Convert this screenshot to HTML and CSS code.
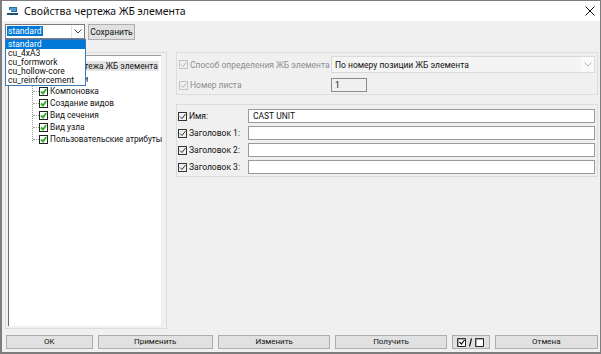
FILE: index.html
```html
<!DOCTYPE html>
<html lang="ru">
  <head>
    <meta charset="UTF-8" />
    <title>Свойства чертежа ЖБ элемента</title>
    <link rel="stylesheet" href="styles.css">
  </head>
  <body>
    <div class="window">
      <div class="titlebar">
        <svg class="app-icon" width="11" height="10" viewBox="0 0 11 10">
          <path d="M2 1h8v5H2z" fill="#2a6f9e" />
          <path d="M3 2h6v3H3z" fill="#4a9fd0" />
          <path d="M0 7h11v2H0z" fill="#1d4f73" />
          <path d="M1 4h3v3H1z" fill="#fff" />
        </svg>
        <span class="title">Свойства чертежа ЖБ элемента</span>
        <svg class="close" width="10" height="10" viewBox="0 0 10 10">
          <path d="M0.5 0.5l9 9M9.5 0.5l-9 9" stroke="#111" stroke-width="1" />
        </svg>
      </div>

      <div class="body">
        <div class="toolbar">
          <div class="combo">
            <span class="combo-value"><span class="selected-text">standard</span></span>
            <span class="combo-arrow">
              <svg width="8" height="5" viewBox="0 0 8 5"><path d="M0.5 0.5l3.5 3.5l3.5-3.5" fill="none" stroke="#444" /></svg>
            </span>
            <ul class="combo-list">
              <li class="active">standard</li>
              <li>cu_4xA3</li>
              <li>cu_formwork</li>
              <li>cu_hollow-core</li>
              <li>cu_reinforcement</li>
            </ul>
          </div>
          <button class="btn btn-save" type="button">Сохранить</button>
        </div>

        <div class="main">
          <div class="tree-frame">
            <div class="tree">
              <div class="node root"><span class="node-label current">Свойства чертежа ЖБ элемента</span></div>
              <div class="node level1"><span class="node-label">Настройки</span></div>
              <div class="children">
                <div class="node leaf"><span class="tick"></span><span class="node-label">Компоновка</span></div>
                <div class="node leaf"><span class="tick"></span><span class="node-label">Создание видов</span></div>
                <div class="node leaf"><span class="tick"></span><span class="node-label">Вид сечения</span></div>
                <div class="node leaf"><span class="tick"></span><span class="node-label">Вид узла</span></div>
                <div class="node leaf"><span class="tick"></span><span class="node-label">Пользовательские атрибуты</span></div>
              </div>
            </div>
          </div>

          <div class="props">
            <div class="group group-top">
              <div class="row">
                <label class="check-label disabled"><span class="cb"></span>Способ определения ЖБ элемента</label>
                <div class="select-disabled">
                  <span>По номеру позиции ЖБ элемента</span>
                  <span class="select-arrow">
                    <svg width="8" height="5" viewBox="0 0 8 5"><path d="M0.5 0.5l3.5 3.5l3.5-3.5" fill="none" stroke="#b5b5b5" /></svg>
                  </span>
                </div>
              </div>
              <div class="row">
                <label class="check-label disabled"><span class="cb"></span>Номер листа</label>
                <div class="sheet-no">1</div>
              </div>
            </div>

            <div class="group group-names">
              <div class="row">
                <label class="check-label short"><span class="cb"></span>Имя:</label>
                <input class="field" type="text" value="CAST UNIT" />
              </div>
              <div class="row">
                <label class="check-label short"><span class="cb"></span>Заголовок 1:</label>
                <input class="field" type="text" value="" />
              </div>
              <div class="row">
                <label class="check-label short"><span class="cb"></span>Заголовок 2:</label>
                <input class="field" type="text" value="" />
              </div>
              <div class="row">
                <label class="check-label short"><span class="cb"></span>Заголовок 3:</label>
                <input class="field" type="text" value="" />
              </div>
            </div>
          </div>
        </div>

        <div class="footer">
          <button class="btn btn-ok" type="button">OK</button>
          <button class="btn btn-apply" type="button">Применить</button>
          <button class="btn btn-modify" type="button">Изменить</button>
          <button class="btn btn-get" type="button">Получить</button>
          <button class="btn btn-toggle" type="button">
            <svg width="27" height="9" viewBox="0 0 27 9">
              <path d="M0.5 0.5h8v8h-8z" fill="#fff" stroke="#222" />
              <path d="M1 1h7M1 1v7" stroke="#555" />
              <path d="M2.5 4l2 2l3-4" fill="none" stroke="#111" stroke-width="1.2" />
              <path d="M14.5 0.5l-2 8" stroke="#111" stroke-width="1.2" />
              <path d="M18.5 0.5h8v8h-8z" fill="#fff" stroke="#222" />
              <path d="M19 1h7M19 1v7" stroke="#555" />
            </svg>
          </button>
          <button class="btn btn-cancel" type="button">Отмена</button>
        </div>
      </div>
    </div>
  </body>
</html>
```

FILE: styles.css
```css
* {
  padding: 0;
  margin: 0;
  box-sizing: border-box;
  font-family: Roboto, "Noto Sans", sans-serif;
}

body {
  width: 601px;
  height: 354px;
  overflow: hidden;
  background: #6f6f6f;
}

.window {
  width: 601px;
  height: 354px;
  display: flex;
  flex-direction: column;
  border: 1px solid #7d7d7d;
  border-left-width: 2px;
  border-bottom-width: 2px;
  background: #f0f0f0;
}

.titlebar {
  height: 21px;
  display: flex;
  align-items: center;
  background: #fff;
  padding-left: 5px;
  padding-right: 4px;
}

.app-icon {
  margin-right: 6px;
}

.title {
  font-family: "Noto Sans", sans-serif;
  font-size: 10.5px;
  color: #111;
  flex: 1;
}

.close {
  margin-right: 1px;
}

.body {
  flex: 1;
  display: flex;
  flex-direction: column;
  padding: 3px 2px 0 3px;
}

/* top toolbar */
.toolbar {
  display: flex;
  gap: 3px;
  height: 16px;
}

.combo {
  position: relative;
  width: 80px;
  height: 15px;
  display: flex;
  background: #fff;
  border: 1px solid #7a7a7a;
}

.combo-value {
  flex: 1;
  padding: 1px 0 0 1px;
  font-size: 8.5px;
  line-height: 11px;
}

.selected-text {
  background: #0078d7;
  color: #fff;
  padding: 0 1px;
}

.combo-arrow {
  width: 13px;
  display: flex;
  align-items: center;
  justify-content: center;
  border-left: 1px solid #e0e0e0;
}

.combo-list {
  position: absolute;
  left: -1px;
  top: 14px;
  width: 81px;
  list-style: none;
  background: #fff;
  border: 1px solid #3c78b4;
  z-index: 5;
}

.combo-list li {
  height: 9px;
  font-size: 8.5px;
  line-height: 9px;
  padding-left: 2px;
  color: #111;
}

.combo-list li.active {
  background: #0078d7;
  color: #fff;
}

.btn {
  background: #e1e1e1;
  border: 1px solid #adadad;
  font-size: 8px;
  color: #111;
  height: 14px;
  line-height: 12px;
}

.btn-save {
  width: 47px;
  height: 16px;
  font-size: 8.5px;
}

/* main area */
.main {
  flex: 1;
  display: flex;
  margin-top: 12px;
}

.tree-frame {
  width: 162px;
  height: 277px;
  padding: 2px 5px 2px 2px;
  border: 1px solid #dcdcdc;
}

.tree {
  height: 100%;
  background: #fff;
  border-left: 1px solid #6d6d6d;
  border-top: 1px solid #a0a0a0;
  padding-top: 4px;
}

.node {
  height: 12px;
  display: flex;
  align-items: center;
  font-size: 8.3px;
  color: #111;
  white-space: nowrap;
}

.root {
  padding-left: 22px;
}

.level1 {
  height: 13px;
  padding-left: 37px;
}

.current {
  background: #e5e5e5;
  padding: 0 1px;
}

.children {
  margin-left: 23px;
  border-left: 1px dotted #9a9a9a;
  height: 56px;
}

.leaf {
  padding-left: 6px;
  position: relative;
}

.leaf::before {
  content: "";
  position: absolute;
  left: 0;
  top: 6px;
  width: 6px;
  border-top: 1px dotted #9a9a9a;
}

.tick {
  width: 9px;
  height: 9px;
  border: 1px solid #222;
  background: #fff url("data:image/svg+xml;utf8,<svg xmlns='http://www.w3.org/2000/svg' width='7' height='7'><path d='M1 3.5l2 2l3.2-4.5' fill='none' stroke='%2322b022' stroke-width='1.8'/></svg>") center no-repeat;
  margin-right: 2px;
  flex: none;
}

/* property groups */
.props {
  flex: 1;
  margin-left: 9px;
  display: flex;
  flex-direction: column;
  gap: 9px;
}

.group {
  border: 1px solid #dcdcdc;
  display: flex;
  flex-direction: column;
}

.group-top {
  height: 43px;
  padding: 3px 2px 0 2px;
  gap: 5px;
}

.group-names {
  height: 73px;
  padding: 4px 2px 0 1px;
  gap: 3px;
}

.row {
  display: flex;
  align-items: center;
}

.group-top .row:first-child {
  height: 17px;
}

.check-label {
  display: flex;
  align-items: center;
  width: 152px;
  font-size: 8.5px;
  color: #111;
  white-space: nowrap;
}

.check-label.short {
  width: 70px;
}

.cb {
  width: 9px;
  height: 9px;
  border: 1px solid #333;
  background: url("data:image/svg+xml;utf8,<svg xmlns='http://www.w3.org/2000/svg' width='7' height='7'><path d='M1 3.5l2 2l3.5-4.5' fill='none' stroke='%23333' stroke-width='1'/></svg>") center no-repeat;
  margin-right: 2px;
  flex: none;
}

.check-label.disabled {
  color: #8d8d8d;
}

.check-label.disabled .cb {
  border-color: #c2c2c2;
  background: url("data:image/svg+xml;utf8,<svg xmlns='http://www.w3.org/2000/svg' width='7' height='7'><path d='M1 3.5l2 2l3.5-4.5' fill='none' stroke='%23b8b8b8' stroke-width='1'/></svg>") center no-repeat;
}

.select-disabled {
  flex: 1;
  height: 17px;
  display: flex;
  align-items: center;
  justify-content: space-between;
  background: #f4f4f4;
  border: 1px solid #dadada;
  font-size: 8.5px;
  color: #111;
  padding-left: 3px;
}

.select-arrow {
  width: 13px;
  height: 15px;
  display: flex;
  align-items: center;
  justify-content: center;
  background: #fafafa;
}

.sheet-no {
  width: 36px;
  height: 14px;
  border: 1px solid #8a8a8a;
  background: #f0f0f0;
  font-size: 8.5px;
  line-height: 12px;
  padding-left: 3px;
  color: #111;
}

.field {
  flex: 1;
  height: 14px;
  border: 1px solid #9a9a9a;
  background: #fff;
  font-size: 8.5px;
  padding-left: 4px;
  color: #111;
  outline: none;
}

/* bottom buttons */
.footer {
  display: flex;
  gap: 5px;
  height: 14px;
  margin: 6px 0 3px 1px;
}

.btn-ok { width: 87px; }
.btn-apply { width: 116px; }
.btn-modify { width: 113px; }
.btn-get { width: 112px; }
.btn-toggle {
  width: 38px;
  display: flex;
  align-items: center;
  justify-content: center;
}
.btn-cancel { width: 104px; }
```
